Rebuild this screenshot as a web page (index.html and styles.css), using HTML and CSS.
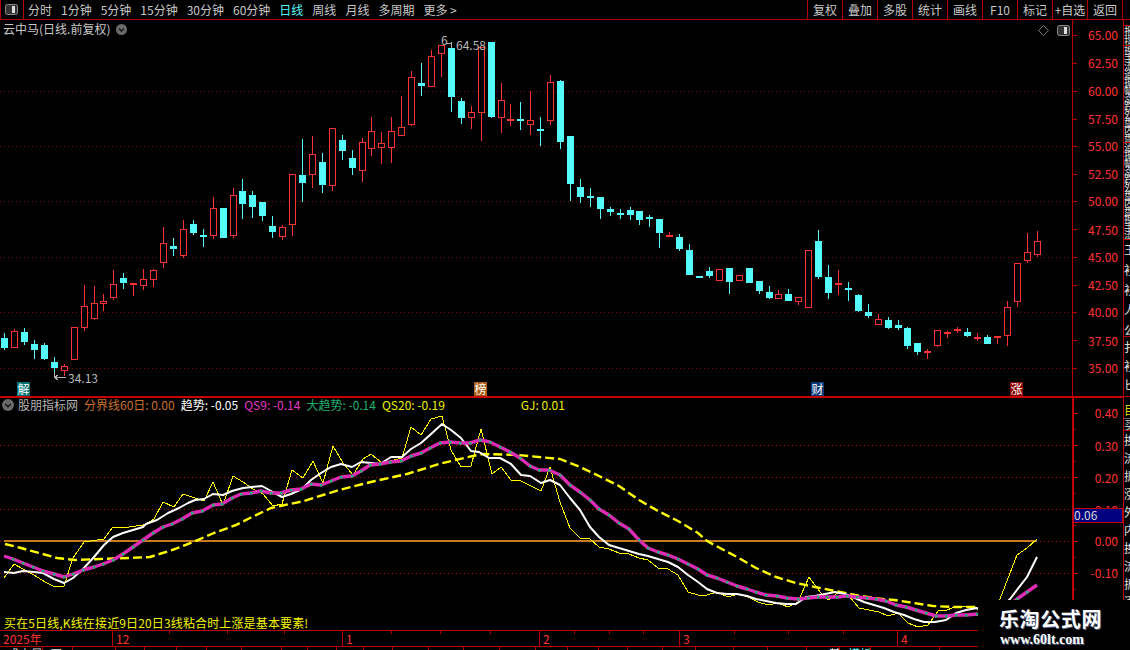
FILE: index.html
```html
<!DOCTYPE html>
<html lang="zh-CN">
<head>
<meta charset="utf-8">
<title>云中马 日线</title>
<link rel="stylesheet" href="styles.css">
</head>
<body>
<div class="screen">
  <header class="toolbar">
    <div class="toggle">
      <svg class="panel-icon" width="13" height="11" viewBox="0 0 13 11"><rect x=".5" y=".5" width="12" height="10" rx="2" fill="#333" stroke="#8a8a8a"/><rect x="7" y="2" width="3" height="7" fill="#ddd"/></svg>
    </div>
    <nav class="periods">
      <span>分时</span><span>1分钟</span><span>5分钟</span><span>15分钟</span><span>30分钟</span><span>60分钟</span><span class="on">日线</span><span>周线</span><span>月线</span><span>多周期</span><span>更多 &gt;</span>
    </nav>
    <nav class="actions">
      <span>复权</span><span>叠加</span><span>多股</span><span>统计</span><span>画线</span><span class="f10">F10</span><span>标记</span><span>+自选</span><span>返回</span>
    </nav>
  </header>

  <div class="body">
    <main class="charts">
      <section class="pane pane-main">
        <div class="plot">
          <svg id="kline" class="plot-svg" width="1072" height="376" viewBox="0 20 1072 376">
            <g class="grid">
              <line x1="0" x2="1072" y1="91.5" y2="91.5"/><line x1="0" x2="1072" y1="146.5" y2="146.5"/><line x1="0" x2="1072" y1="201.5" y2="201.5"/><line x1="0" x2="1072" y1="257.5" y2="257.5"/><line x1="0" x2="1072" y1="312.5" y2="312.5"/><line x1="0" x2="1072" y1="368.5" y2="368.5"/>
            </g>
            <g id="candles"></g>
            <g class="marks">
              <path d="M446 43.5H452M451.5 43V48M54.5 377V372M54 377.5H66M54 377.5L58 375M54 377.5L58 380"/>
              <text x="441" y="45">6</text><text x="456" y="50">64.58</text><text x="68" y="383">34.13</text>
            </g>
          </svg>
          <div class="title">
            <span>云中马(日线.前复权)</span>
            <svg class="chev" width="11" height="11" viewBox="0 0 11 11"><circle cx="5.5" cy="5.5" r="5.5" fill="#6a6a6a"/><path d="M3 4.5L5.5 7L8 4.5" fill="none" stroke="#111" stroke-width="1.3"/></svg>
          </div>
          <div class="corner-icons">
            <svg width="11" height="11" viewBox="0 0 11 11"><path d="M5.5 .5L10.5 5.5L5.5 10.5L.5 5.5Z" fill="none" stroke="#777"/></svg>
            <svg width="13" height="11" viewBox="0 0 13 11"><rect x=".5" y=".5" width="12" height="10" rx="2" fill="#333" stroke="#8a8a8a"/><rect x="7" y="2" width="3" height="7" fill="#ddd"/></svg>
          </div>
          <span class="badge b-jie">解</span><span class="badge b-bang">榜</span><span class="badge b-cai">财</span><span class="badge b-zhang">涨</span>
        </div>
        <svg class="axis" width="51" height="376" viewBox="1072 20 51 376">
          <path class="axis-line" d="M1072.5 20V396M1072 35.5h5M1072 63.5h5M1072 91.5h5M1072 119.5h5M1072 146.5h5M1072 174.5h5M1072 201.5h5M1072 229.5h5M1072 257.5h5M1072 285.5h5M1072 312.5h5M1072 340.5h5M1072 368.5h5"/>
          <g class="axis-labels">
            <text x="1118" y="40">65.00</text><text x="1118" y="68">62.50</text><text x="1118" y="96">60.00</text><text x="1118" y="124">57.50</text><text x="1118" y="151">55.00</text><text x="1118" y="179">52.50</text><text x="1118" y="206">50.00</text><text x="1118" y="235">47.50</text><text x="1118" y="262">45.00</text><text x="1118" y="290">42.50</text><text x="1118" y="317">40.00</text><text x="1118" y="346">37.50</text><text x="1118" y="373">35.00</text>
          </g>
        </svg>
      </section>

      <section class="pane pane-sub">
        <div class="plot">
          <svg class="plot-svg" width="1072" height="232" viewBox="0 398 1072 232">
            <defs>
              <marker id="node" markerUnits="userSpaceOnUse" markerWidth="3" markerHeight="3" refX="1.5" refY="1.5"><rect width="3" height="3" fill="#1eb070"/></marker>
            </defs>
            <g class="grid bright">
              <line x1="0" x2="1072" y1="445.5" y2="445.5"/><line x1="0" x2="1072" y1="477.5" y2="477.5"/><line x1="0" x2="1072" y1="509.5" y2="509.5"/><line x1="0" x2="1072" y1="541.5" y2="541.5"/><line x1="0" x2="1072" y1="573.5" y2="573.5"/>
            </g>
            <line class="zero" x1="4" x2="1037" y1="541" y2="541"/>
            <polyline class="ln thin" points="4,578 14,564 23,569 34,575 45,582 55,587 64,586 73,558 84,542 104,539 113,527 129,527 143,525 146,524 154,519 163,502 174,507 183,494 204,501 213,482 223,505 233,476 243,482 253,489 263,494 273,506 282,504 292,470 303,478 313,461 323,483 333,446 343,463 353,475 363,459 371,454 382,463 402,458 411,427 421,435 431,419 442,416 451,450 461,467 471,466 481,429 492,474 501,467 511,480 521,481 541,491 550,467 560,502 570,528 580,538 590,539 599,547 609,549 619,553 629,554 639,558 648,560 658,568 668,569 678,575 688,592 698,595 707,595 717,592 728,597 738,594 748,597 758,602 768,605 778,603 788,607 798,602 809,577 820,592 828,600 839,592 849,596 859,608 869,610 879,612 888,616 898,613 908,623 918,627 928,625 938,611 947,610 957,606 967,607 977,608 985,625 1000,599 1017,555 1027,548 1037,539"/>
            <polyline class="ln dash" points="5,544 21,548 39,553 57,558 75,560 100,559 129,558 150,557 175,549 193,542 214,533 236,525 250,518 271,508 304,501 339,490 375,481 407,474 439,464 464,458 482,454 518,455 560,459 580,467 599,476 619,486 639,500 658,511 678,521 698,533 707,541 737,557 756,568 776,577 796,583 815,587 835,591 855,595 874,598 894,600 914,603 933,606 953,607 977,607"/>
            <polyline class="ln white" points="4,572 14,573 23,571 34,572 43,573 54,579 64,583 73,578 83,569 94,557 104,545 113,537 123,533 133,530 143,527 146,524 157,520 168,513 179,508 188,503 195,500 204,499 213,494 223,495 232,491 243,488 252,487 262,486 271,491 282,497 291,494 302,489 311,480 321,473 331,467 341,464 352,467 361,462 371,463 380,464 391,457 402,457 411,449 421,443 430,435 442,424 451,430 461,438 471,451 479,452 489,458 500,458 511,464 521,475 530,476 541,483 550,480 560,485 570,498 580,510 590,527 599,537 609,545 619,548 629,551 639,554 648,556 658,559 668,562 678,567 688,575 698,582 707,589 717,593 727,594 737,594 747,596 756,599 766,601 776,603 786,604 796,604 806,597 815,596 825,594 835,592 845,594 855,598 864,602 874,605 884,608 894,612 904,615 914,619 924,622 935,622 946,620 956,613 966,610 977,608 990,620 1010,599 1027,577 1037,557"/>
            <polyline class="ln pink" points="4,556 13,559 23,563 33,567 43,571 54,574 64,577 73,574 83,570 94,567 103,564 113,560 123,554 133,547 143,540 153,533 163,527 172,524 182,519 192,513 202,511 213,505 222,504 232,498 241,494 251,493 261,491 271,493 281,493 291,490 301,489 311,484 321,485 331,481 341,477 352,476 361,471 370,465 380,464 390,462 401,461 411,456 421,453 430,448 440,443 450,442 460,443 470,443 480,440 490,442 500,447 510,452 520,458 530,466 539,470 549,470 560,475 570,485 580,492 590,500 599,509 609,515 619,523 629,529 639,540 648,548 658,552 668,555 678,559 688,564 698,569 707,575 717,578 727,582 737,586 747,589 756,592 766,595 777,596 787,598 798,599 808,598 818,597 827,597 837,597 847,596 857,597 867,598 876,599 886,601 896,605 906,607 916,610 926,613 936,616 946,616 956,615 966,615 977,614 990,620 1005,608 1017,599 1027,592 1037,585"/>
          </svg>
          <div class="legend">
            <svg class="chev" width="12" height="12" viewBox="0 0 11 11"><circle cx="5.5" cy="5.5" r="5.5" fill="#6a6a6a"/><path d="M3 4.5L5.5 7L8 4.5" fill="none" stroke="#111" stroke-width="1.3"/></svg>
            <span class="l-name">股朋指标网</span>
            <span class="l-orange">分界线60日: 0.00</span>
            <span class="l-white">趋势: -0.05</span>
            <span class="l-pink">QS9: -0.14</span>
            <span class="l-green">大趋势: -0.14</span>
            <span class="l-yellow">QS20: -0.19</span>
            <span class="l-yellow l-gj">GJ: 0.01</span>
          </div>
          <p class="note">买在5日线,K线在接近9日20日3线粘合时上涨是基本要素!</p>
        </div>
        <svg class="axis axis-sub" width="51" height="232" viewBox="1072 398 51 232">
          <path class="axis-line" d="M1073 398V630"/>
          <path class="axis-line" d="M1073 413.5h5M1073 429.5h3M1073 445.5h5M1073 461.5h3M1073 477.5h5M1073 493.5h3M1073 509.5h5M1073 525.5h3M1073 541.5h5M1073 557.5h3M1073 573.5h5M1073 589.5h3"/>
          <g class="axis-labels">
            <text x="1118" y="418">0.40</text><text x="1118" y="451">0.30</text><text x="1118" y="483">0.20</text><text x="1118" y="515">0.10</text><text x="1118" y="546">0.00</text><text x="1118" y="578">-0.10</text>
          </g>
          <rect class="cur-box" x="1073.5" y="508.5" width="49" height="14"/>
          <text class="cur-text" x="1074" y="520">0.06</text>
        </svg>
      </section>

      <div class="dates">
        <svg class="date-ticks" width="1123" height="3" viewBox="0 0 1123 3"><path d="M169.5 0v3M227.5 0v3M284.5 0v3M391.5 0v3M440.5 0v3M490.5 0v3M574.5 0v3M609.5 0v3M643.5 0v3M734.5 0v3M788.5 0v3M843.5 0v3"/></svg>
        <span>2025年</span><span>12</span><span>1</span><span>2</span><span>3</span><span>4</span>
      </div>
      <div class="tabs">
        <span>成交量</span><span>买</span><span></span><span></span><span></span><span></span><span></span><span></span><span></span><span></span><span></span><span></span><span></span><span></span><span></span><span></span><span></span><span></span><span></span><span></span><span></span><span></span><span></span><span></span><span class="w">其</span><span class="c">模板</span><span></span><span></span>
      </div>
    </main>

    <aside class="strip">
      <div class="s s0"></div>
      <div class="s s1">报指</div>
      <div class="s s2">换手流通振幅涨跌外盘内盘换手流</div>
      <div class="s s2">通振幅涨跌外盘内盘换手流通振幅</div>
      <div class="s s3">王衫衫人公</div>
      <div class="s s4">扌衫匕</div>
      <div class="s s5">目</div>
      <div class="s s6">买</div>
      <div class="s s7">换流振涨外内换流振涨</div>
    </aside>
  </div>

  <aside class="watermark">
    <strong class="wm-cn">乐淘公式网</strong>
    <strong class="wm-en">www.60lt.com</strong>
  </aside>
</div>
<script src="candles.js"></script>
</body>
</html>
```

FILE: styles.css
```css
* { box-sizing: border-box; }
html, body { margin: 0; padding: 0; background: #000; }
body { width: 1130px; height: 650px; overflow: hidden; }

.screen {
  --line: #b40000;
  --ui: #c8c8c8;
  --price: #ff3232;
  position: relative;
  width: 1130px;
  height: 650px;
  overflow: hidden;
  display: flex;
  flex-direction: column;
  background: #000;
  color: var(--ui);
  font: 12px/14px "Noto Sans CJK SC", sans-serif;
}

/* toolbar */
.toolbar {
  flex: 0 0 20px;
  display: flex;
  align-items: stretch;
  border-bottom: 1px solid var(--line);
  line-height: 19px;
}
.toggle {
  width: 24px;
  border-left: 1px solid var(--line);
  border-right: 1px solid var(--line);
  display: flex;
  align-items: center;
  padding-left: 4px;
}
.periods { display: flex; gap: 9px; padding-left: 4px; }
.periods .on { color: #54fcfc; }
.actions { display: flex; margin-left: auto; margin-right: 7px; border-right: 1px solid var(--line); }
.actions span { width: 35px; text-align: center; border-left: 1px solid var(--line); white-space: nowrap; }

/* layout */
.body { flex: 1; min-height: 0; display: flex; }
.charts { width: 1123px; display: flex; flex-direction: column; }
.pane { display: flex; border-bottom: 2px solid #c80000; }
.pane-main { flex: 0 0 378px; }
.pane-sub { flex: 0 0 233px; border-bottom-width: 1px; border-bottom-color: var(--line); }
.plot { position: relative; width: 1072px; }
.plot-svg, .axis { display: block; flex: none; }

/* svg */
.grid line { stroke: #800000; stroke-dasharray: 1 3; shape-rendering: crispEdges; }
.grid.bright line { stroke: #c00000; }
.marks path { fill: none; stroke: #b0b0b0; shape-rendering: crispEdges; }
.marks text { fill: #b8b8b8; font-size: 12px; }
.axis-line { fill: none; stroke: #b80000; shape-rendering: crispEdges; }
.axis-sub .axis-line:first-child { stroke-width: 2; stroke: #c00000; }
.axis-labels text { fill: var(--price); text-anchor: end; font-size: 12px; }
.cur-box { fill: #000080; stroke: #c00000; shape-rendering: crispEdges; }
.cur-text { fill: #d8d8d8; font-size: 12px; }

.zero { stroke: #c87a20; stroke-width: 2; shape-rendering: crispEdges; }
.ln { fill: none; stroke-linejoin: round; }
.ln.thin { stroke: #ffff00; stroke-width: 1; shape-rendering: crispEdges; }
.ln.dash { stroke: #ffff00; stroke-width: 2.4; stroke-dasharray: 9 4; }
.ln.white { stroke: #fff; stroke-width: 2; }
.ln.pink { stroke: #dc2cb4; stroke-width: 3.4; marker-mid: url(#node); }

/* chart overlays */
.title {
  position: absolute;
  left: 3px;
  top: 2px;
  display: flex;
  align-items: center;
  gap: 6px;
  white-space: nowrap;
}
.corner-icons { position: absolute; right: 2px; top: 5px; display: flex; gap: 8px; }
.badge {
  position: absolute;
  top: 362px;
  width: 13px;
  height: 14px;
  font-size: 12px;
  line-height: 14px;
  text-align: center;
  color: #fff;
}
.b-jie { left: 17px; background: #007070; }
.b-bang { left: 474px; background: #a85a14; }
.b-cai { left: 811px; background: #0c3a78; }
.b-zhang { left: 1010px; background: #8a0000; }

.legend {
  position: absolute;
  left: 2px;
  top: 0;
  right: 0;
  height: 14px;
  display: flex;
  align-items: center;
  gap: 6px;
  white-space: nowrap;
}
.legend .chev { margin-right: -2px; }
.l-name { color: #b4b4b4; }
.l-orange { color: #c8702c; }
.l-white { color: #fff; }
.l-pink { color: #e238c0; }
.l-green { color: #1eb070; }
.l-yellow { color: #f0f000; }
.l-gj { margin-left: 70px; }
.note {
  position: absolute;
  left: 4px;
  bottom: 0;
  margin: 0;
  color: #f5f500;
  line-height: 15px;
  letter-spacing: .14px;
}

/* date axis */
.dates {
  position: relative;
  flex: 0 0 16px;
  display: grid;
  grid-template-columns: 112px 230px 197px 140px 218px 1fr;
  border-bottom: 1px solid var(--line);
  color: var(--price);
  line-height: 15px;
}
.dates span { padding-left: 3px; }
.dates span + span { border-left: 1px solid var(--line); }
.date-ticks { position: absolute; left: 0; top: 0; }
.date-ticks path { stroke: var(--line); fill: none; }

.tabs {
  flex: 1;
  overflow: hidden;
  display: grid;
  grid-template-columns: 43px 30px 43px 29px 32px 30px 35px 40px 26px 29px 27px 29px 36px 35px 36px 36px 32px 31px 29px 35px 33px 38px 34px 39px 33px 31px 69px 1fr;
  line-height: 14px;
  color: #ddd;
}
.tabs span { border-right: 1px solid var(--line); padding: 0 0 0 7px; overflow: hidden; white-space: nowrap; }
.tabs .c { color: #54fcfc; padding-left: 8px; }
.tabs .w { padding-left: 22px; }

/* clipped right strip */
.strip {
  flex: 1;
  border-left: 1px solid var(--line);
  overflow: hidden;
  display: flex;
  flex-direction: column;
  color: #e0e0e0;
}
.s {
  width: 12px;
  word-break: break-all;
  overflow: hidden;
  border-bottom: 1px solid var(--line);
}
.s0 { height: 6px; }
.s1 { height: 20px; font-size: 10px; line-height: 10px; }
.s2 { height: 97px; font-size: 10px; line-height: 8px; }
.s3 { height: 97px; line-height: 20px; }
.s4 { height: 60px; line-height: 19px; }
.s5 { height: 22px; padding-top: 6px; color: #d8d800; line-height: 14px; border-bottom-color: #666; }
.s6 { height: 12px; line-height: 12px; }
.s7 { height: 170px; font-size: 12px; line-height: 18px; border-bottom: 0; }

/* watermark */
.watermark {
  position: absolute;
  right: 0;
  bottom: 0;
  width: 152px;
  height: 50px;
  background: #000;
  padding: 8px 0 0 21px;
  display: flex;
  flex-direction: column;
  color: #fff;
}
.wm-cn { font: 700 20px/22px "Noto Sans CJK SC", sans-serif; letter-spacing: .6px; text-shadow: 1px 1px 0 #4a5a80; }
.wm-en { font: 700 14px/17px "Liberation Serif", serif; margin-left: 1px; margin-top: 1px; text-shadow: 1px 1px 0 #4a5a80; }
```

FILE: candles.js
```js
// Candle data: x, wick top, body top, body bottom, wick bottom, r(ise) / c(fall).
var groups = [
  { ox: 0, oy: 130, rows: [
    [13,610,624,654,660,'c'],[43,598,603,653,653,'r'],[73,595,606,636,645,'c'],[103,630,642,660,687,'c'],
    [133,640,645,687,690,'c'],[163,682,696,714,745,'c'],[193,703,709,722,738,'r'],[223,592,592,689,689,'r'],
    [253,465,529,593,603,'r'],[283,468,520,566,570,'r'],[310,492,514,521,543,'r'],[340,420,463,503,510,'r'],
    [370,430,444,459,477,'c'],[400,460,460,465,498,'r'],[430,418,448,467,480,'r'],[460,417,421,449,471,'r'],
    [490,291,340,398,414,'r'],[520,324,348,357,378,'c'],[550,270,298,377,384,'r'],[580,270,282,309,315,'c'],
    [610,297,315,320,351,'c'],[640,201,235,317,327,'r'],[670,234,234,324,324,'c'],[700,174,196,317,324,'r'],
    [727,147,183,222,267,'c'],[757,183,195,231,264,'c'],[787,216,216,258,273,'c'],[817,258,288,306,324,'c'],
    [847,285,292,320,330,'r'],[877,133,133,284,318,'r'],[907,27,135,159,216,'c'],[937,18,73,134,174,'r'],
    [967,69,96,165,189,'c'],[997,-6,-6,167,183,'r'],[1027,15,30,63,90,'c'],[1057,60,84,114,135,'c']
  ]},
  { ox: 360, oy: 30, rows: [
    [7,324,336,422,456,'r'],[34,262,304,356,378,'r'],[64,307,340,353,402,'r'],[94,262,304,353,399,'r'],
    [124,198,292,318,318,'r'],[154,124,142,285,288,'r'],[184,99,159,168,198,'c'],[214,60,79,170,170,'r'],
    [244,45,46,71,141,'r'],[274,36,54,201,246,'c'],[304,205,213,264,282,'c'],[334,228,247,263,297,'r'],
    [364,52,52,248,333,'r'],[394,36,36,261,264,'c'],[424,159,211,263,309,'r'],[451,222,267,270,288,'r'],
    [481,216,267,270,300,'c'],[511,183,271,285,315,'r'],[541,262,297,300,348,'c'],[571,136,157,272,285,'r'],
    [601,150,153,336,357,'c'],[631,318,318,462,513,'c'],[661,447,471,501,519,'c'],[691,474,498,501,531,'c'],
    [721,501,501,537,567,'c'],[751,531,537,546,558,'c'],[781,537,549,552,567,'c'],[811,531,540,555,570,'c'],
    [838,543,543,570,585,'c'],[868,555,561,567,591,'c'],[898,567,567,609,654,'c'],[928,606,615,621,621,'r'],
    [958,612,621,657,663,'c'],[988,642,660,735,735,'c']
  ]},
  { ox: 700, oy: 200, rows: [
    [-2,228,228,234,234,'c'],[28,201,213,228,234,'c'],[58,208,208,243,243,'r'],[88,204,204,246,282,'c'],
    [118,226,226,242,242,'r'],[148,204,204,249,249,'c'],[178,243,243,273,282,'c'],[208,258,276,294,297,'c'],
    [235,270,283,296,297,'r'],[265,267,282,303,303,'c'],[295,290,290,305,315,'r'],[325,151,151,323,323,'r'],
    [355,90,123,231,237,'c'],[385,195,231,279,297,'c'],[415,210,249,255,285,'r'],[445,246,264,270,303,'c'],
    [475,282,285,333,336,'c'],[505,312,336,348,354,'c'],[535,342,358,374,375,'r'],[565,351,360,384,387,'c'],
    [595,360,375,384,390,'c'],[622,381,384,438,447,'c'],[652,429,429,456,465,'c'],[682,447,453,458,477,'r'],
    [712,391,391,437,440,'r'],[741,393,396,399,414,'r'],[771,381,387,393,399,'r'],[802,384,396,408,411,'c'],
    [831,399,410,413,423,'r'],[862,405,411,432,432,'c'],[892,408,409,415,432,'r'],[922,303,322,407,438,'r'],
    [952,190,190,305,321,'r'],[982,99,157,182,189,'r'],[1012,93,124,164,172,'r']
  ]}
];

var NS = 'http://www.w3.org/2000/svg';
var host = document.getElementById('candles');

function rect(x, y, w, h, cls) {
  var r = document.createElementNS(NS, 'rect');
  r.setAttribute('x', x); r.setAttribute('y', y);
  r.setAttribute('width', w); r.setAttribute('height', h);
  r.setAttribute('class', cls);
  host.appendChild(r);
}

groups.forEach(function (g) {
  g.rows.forEach(function (row) {
    var x = Math.floor(g.ox + row[0] / 3);
    var wt = Math.round(g.oy + row[1] / 3), bt = Math.round(g.oy + row[2] / 3);
    var bb = Math.round(g.oy + row[3] / 3), wb = Math.round(g.oy + row[4] / 3);
    var kind = row[5];
    rect(x, wt, 1, Math.max(wb - wt, 1), 'wick-' + kind);
    if (kind === 'c' || bb - bt < 3) {
      rect(x - 3, bt, 7, Math.max(bb - bt, 2), 'fill-' + kind);
    } else {
      rect(x - 2.5, bt + 0.5, 6, bb - bt - 1, 'body-r');
    }
  });
});

var style = document.createElement('style');
document.head.appendChild(style);
style.textContent =
  '#candles rect{shape-rendering:crispEdges}' +
  '.wick-r,.fill-r{fill:#ff3232}.wick-c,.fill-c{fill:#54fcfc}' +
  '.body-r{fill:#000;stroke:#ff3232}';
```
